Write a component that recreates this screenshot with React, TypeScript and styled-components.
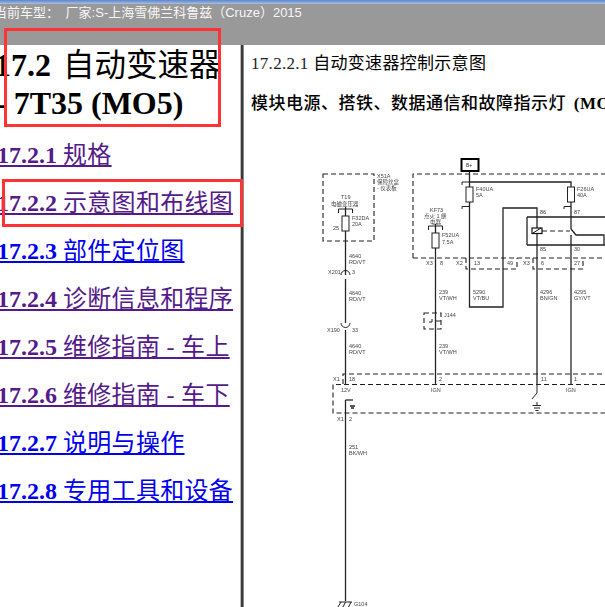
import styled, { createGlobalStyle } from "styled-components";

const GlobalStyle = createGlobalStyle`
  html, body {
    margin: 0;
    padding: 0;
    background: #fff;
    overflow: hidden;
  }
`;

const Page = styled.div`
  position: relative;
  width: 605px;
  height: 607px;
  overflow: hidden;
  display: flex;
  flex-direction: column;
`;

const TopStrip = styled.div`
  height: 4px;
  flex: none;
  background: linear-gradient(#5c86c8, #a9bfe2);
`;

const TitleBar = styled.div`
  height: 41px;
  flex: none;
  background: #999999;
  color: #f6f6f6;
  font: 13px/18px "Liberation Sans", "Noto Sans CJK SC", sans-serif;
  word-spacing: 3px;
  white-space: nowrap;
  margin-left: -6px;
  box-sizing: border-box;
`;

const Main = styled.div`
  flex: 1;
  display: flex;
  min-height: 0;
`;

const Sidebar = styled.nav`
  width: 240px;
  flex: none;
  overflow: hidden;
  font-family: "Liberation Serif", "Noto Sans CJK SC", serif;
`;

const Divider = styled.div`
  width: 4px;
  flex: none;
  background: linear-gradient(90deg, #bdbdbd 0 1px, #3a3a3a 1px 3px, #8a8a8a 3px);
`;

const Heading = styled.h1`
  margin: 0 0 0 -5px;
  width: 300px;
  font-size: 32px;
  line-height: 38px;
  font-weight: 700;
  white-space: nowrap;
  color: #000;
  padding-top: 1px;
`;

const HeadingLine = styled.div`
  height: 38px;
`;

const HeadingName = styled.span`
  font-weight: 400;
  font-size: 31.5px;
  margin-left: 4px;
`;

const LinkName = styled.span`
  font-weight: 400;
  letter-spacing: 0.3px;
`;

const LinkList = styled.ul`
  list-style: none;
  margin: 19px 0 0 -3px;
  padding: 0;
  display: flex;
  flex-direction: column;
  gap: 20px;
`;

const NavLink = styled.a<{ $visited?: boolean }>`
  display: block;
  height: 28px;
  font-size: 24px;
  line-height: 28px;
  font-weight: 700;
  white-space: nowrap;
  text-decoration: underline;
  color: ${(p) => (p.$visited ? "#551a8b" : "#0000ee")};
`;

const Content = styled.main`
  flex: 1;
  min-width: 0;
  overflow: hidden;
  font-family: "Liberation Serif", "Noto Sans CJK SC", serif;
  color: #000;
`;

const SubTitle = styled.div`
  margin: 9px 0 0 7px;
  height: 20px;
  font-size: 17px;
  line-height: 20px;
  letter-spacing: 0.3px;
  white-space: nowrap;
`;

const SubNumber = styled.span`
  color: #222;
`;

const Caption = styled.div`
  margin: 20px 0 0 7px;
  height: 20px;
  font-size: 17px;
  line-height: 20px;
  letter-spacing: 0.5px;
  word-spacing: 3px;
  font-weight: 500;
  white-space: nowrap;
`;

const CaptionLatin = styled.span`
  font-weight: 700;
`;

const Schematic = styled.svg`
  display: block;
  margin-top: 24px;
  width: 361px;
  height: 469px;
`;

const RedBox = styled.div<{ $x: number; $y: number; $w: number; $h: number }>`
  position: absolute;
  left: ${(p) => p.$x}px;
  top: ${(p) => p.$y}px;
  width: ${(p) => p.$w}px;
  height: ${(p) => p.$h}px;
  box-sizing: border-box;
  border: 3px solid #ff3333;
`;

const links = [
  { num: "17.2.1", label: "规格", visited: true },
  { num: "17.2.2", label: "示意图和布线图", visited: true },
  { num: "17.2.3", label: "部件定位图", visited: false },
  { num: "17.2.4", label: "诊断信息和程序", visited: true },
  { num: "17.2.5", label: "维修指南 - 车上", visited: true },
  { num: "17.2.6", label: "维修指南 - 车下", visited: true },
  { num: "17.2.7", label: "说明与操作", visited: false },
  { num: "17.2.8", label: "专用工具和设备", visited: false },
];

// x, y, text in page coordinates, the svg viewBox starts at 244,138
const labels: [number, number, string][] = [
  [377, 178, "X51A"],
  [377, 184, "保险丝盒"],
  [377, 190, "- 仪表板"],
  [341, 199, "T19"],
  [331, 206, "电磁变压器"],
  [352, 220, "F32DA"],
  [352, 226, "20A"],
  [333, 230, "25"],
  [349, 258, "4640"],
  [349, 264, "RD/VT"],
  [328, 274, "X201"],
  [352, 274, "3"],
  [349, 295, "4640"],
  [349, 301, "RD/VT"],
  [327, 332, "X190"],
  [352, 332, "33"],
  [349, 348, "4640"],
  [349, 354, "RD/VT"],
  [333, 381, "X1"],
  [349, 381, "18"],
  [341, 392, "12V"],
  [337, 421, "X1"],
  [349, 421, "2"],
  [349, 449, "251"],
  [349, 455, "BK/WH"],
  [354, 606, "G104"],
  [430, 212, "KF73"],
  [424, 218, "点火 1 继"],
  [430, 224, "电器"],
  [442, 237, "F52UA"],
  [442, 244, "7.5A"],
  [476, 191, "F40UA"],
  [476, 197, "5A"],
  [577, 191, "F26UA"],
  [577, 197, "40A"],
  [540, 214, "86"],
  [574, 214, "87"],
  [540, 251, "85"],
  [574, 251, "30"],
  [426, 265, "X3"],
  [440, 265, "8"],
  [456, 265, "X2"],
  [474, 265, "13"],
  [507, 265, "49"],
  [523, 265, "X3"],
  [541, 265, "6"],
  [574, 265, "27"],
  [439, 294, "239"],
  [439, 300, "VT/WH"],
  [473, 294, "5290"],
  [473, 300, "VT/BU"],
  [540, 294, "4296"],
  [540, 300, "BN/GN"],
  [574, 294, "4295"],
  [574, 300, "GY/VT"],
  [444, 317, "J144"],
  [439, 348, "239"],
  [439, 354, "VT/WH"],
  [439, 381, "2"],
  [541, 381, "11"],
  [574, 381, "1"],
  [431, 392, "IGN"],
  [566, 392, "IGN"],
];

const wires = [
  "M345.5 208V275",
  "M345.5 279V323",
  "M345.5 330V384",
  "M345.5 400V601",
  "M345.5 400H353",
  "M435.5 226V384",
  "M469.5 171V307H503V208H537V384",
  "M469.5 182H571V229",
  "M571 235V384",
  "M527 217H605M527 245H605M527 217V245",
  "M571 229L576 235H604V245",
];

const dashes = [
  "M323 174H374V241H323Z",
  "M413 258V174H605M413 258H605",
  "M466 258V269H517V258",
  "M533 258V269H583V258",
  "M424 313H441V329H424Z",
  "M343 384V374H605",
  "M605 384.5H333V413H605",
];

function Fuse({ x, y }: { x: number; y: number }) {
  return <rect x={x - 3.5} y={y} width={7} height={15} fill="#fff" stroke="#222" strokeWidth={1} />;
}

function Fork({ x, y }: { x: number; y: number }) {
  return <path d={`M${x - 7} ${y + 4}V${y}H${x + 7}V${y + 4}M${x} ${y - 2}V${y + 4}`} fill="none" stroke="#222" strokeWidth={1} />;
}

function Schema() {
  return (
    <Schematic viewBox="244 138 361 469">
      <defs>
        <filter id="soft">
          <feGaussianBlur stdDeviation="0.35" />
        </filter>
      </defs>
      <g filter="url(#soft)">
        <g fill="none" stroke="#222" strokeWidth={1.3}>
          {wires.map((d) => (
            <path key={d} d={d} />
          ))}
        </g>
        <g fill="none" stroke="#222" strokeWidth={1.1} strokeDasharray="5 3">
          {dashes.map((d) => (
            <path key={d} d={d} />
          ))}
          <path d="M542 231H570" />
        </g>
        <rect x={461.5} y={159} width={17} height={12} fill="#fff" stroke="#000" strokeWidth={2} />
        <text x={466} y={167} fontSize={5} fontFamily="Liberation Sans" fill="#333">B+</text>
        <Fuse x={345.5} y={216} />
        <Fuse x={435.5} y={233} />
        <Fuse x={469.5} y={187} />
        <Fuse x={571} y={187} />
        <Fork x={345.5} y={209} />
        <Fork x={435.5} y={226} />
        <path d="M462 185V182H469M462 209V206.500H469M564 209V206.500H571" fill="none" stroke="#222" strokeWidth={1} />
        <rect x={532} y={228} width={10} height={5.500} fill="#fff" stroke="#111" strokeWidth={1.2} />
        <path d="M533 233L541 228" stroke="#111" strokeWidth={1} />
        <path d="M341 275a4.500 4.500 0 0 1 9 0M341 323a4.500 4.500 0 0 0 9 0" fill="none" stroke="#222" strokeWidth={1} />
        <path d="M429 322H432V319M435.500 321H441" fill="none" stroke="#222" strokeWidth={1} />
        <path d="M350 406H355M351 408H354" stroke="#222" strokeWidth={1.300} />
        <path d="M537 384V393L532 399M537 402V405M532.500 405.500H541M534 408H540M535.500 410.500H538.500" fill="none" stroke="#222" strokeWidth={1} />
        <path d="M339 602H352M341 602L338 607M345.500 602L343 607M351 602L348.500 607" fill="none" stroke="#222" strokeWidth={1} />
        <g fontSize={5.500} fontFamily="Liberation Sans, Noto Sans CJK SC, sans-serif" fill="#444">
          {labels.map(([x, y, t]) => (
            <text key={`${x}-${y}`} x={x} y={y}>
              {t}
            </text>
          ))}
        </g>
      </g>
    </Schematic>
  );
}

export default function App() {
  return (
    <Page>
      <GlobalStyle />
      <TopStrip />
      <TitleBar>当前车型： 厂家:S-上海雪佛兰科鲁兹（Cruze）2015</TitleBar>
      <Main>
        <Sidebar>
          <Heading>
            <HeadingLine>
              17.2 <HeadingName>自动变速器</HeadingName>
            </HeadingLine>
            <HeadingLine>- 7T35 (MO5)</HeadingLine>
          </Heading>
          <LinkList>
            {links.map((l) => (
              <li key={l.num}>
                <NavLink href="#" $visited={l.visited}>
                  {l.num} <LinkName>{l.label}</LinkName>
                </NavLink>
              </li>
            ))}
          </LinkList>
        </Sidebar>
        <Divider />
        <Content>
          <SubTitle>
            <SubNumber>17.2.2.1</SubNumber> 自动变速器控制示意图
          </SubTitle>
          <Caption>
            模块电源、搭铁、数据通信和故障指示灯 <CaptionLatin>(MO5)</CaptionLatin>
          </Caption>
          <Schema />
        </Content>
      </Main>
      <RedBox $x={4} $y={28} $w={217} $h={99} />
      <RedBox $x={2} $y={179} $w={241} $h={48} />
    </Page>
  );
}
